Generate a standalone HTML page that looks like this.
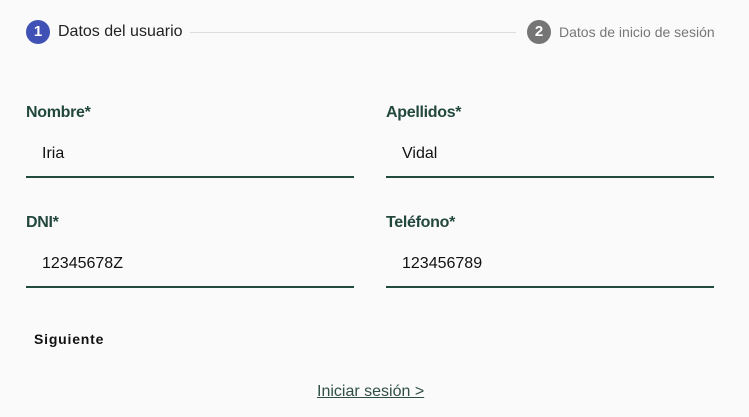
<!DOCTYPE html>
<html><head><meta charset="utf-8"><style>
body{margin:0;width:749px;height:417px;background:#fafafa;font-family:"Liberation Sans",sans-serif;position:relative;overflow:hidden}
.a{position:absolute}
.c{width:24px;height:24px;border-radius:50%;color:#fff;font-size:15px;font-weight:bold;text-align:center;line-height:24px}
.lbl{font-weight:bold;font-size:16px;color:#22473d;letter-spacing:-0.3px}
.val{font-size:16px;color:#111}
.ln{height:2px;background:#234a3f}
</style></head><body>
<div class="a c" style="left:26px;top:20px;background:#3f51b5">1</div>
<div class="a" style="left:58px;top:23px;font-size:16px;color:#222">Datos del usuario</div>
<div class="a" style="left:190px;top:32px;width:326px;height:1px;background:#ddd"></div>
<div class="a c" style="left:527px;top:20px;background:#757575">2</div>
<div class="a" style="left:559px;top:24px;font-size:14px;color:#777">Datos de inicio de sesión</div>

<div class="a lbl" style="left:26px;top:104px">Nombre*</div>
<div class="a val" style="left:42px;top:145px">Iria</div>
<div class="a ln" style="left:26px;top:176px;width:328px"></div>
<div class="a lbl" style="left:386px;top:104px">Apellidos*</div>
<div class="a val" style="left:402px;top:145px">Vidal</div>
<div class="a ln" style="left:386px;top:176px;width:328px"></div>

<div class="a lbl" style="left:26px;top:214px">DNI*</div>
<div class="a val" style="left:42px;top:255px">12345678Z</div>
<div class="a ln" style="left:26px;top:286px;width:328px"></div>
<div class="a lbl" style="left:386px;top:214px">Teléfono*</div>
<div class="a val" style="left:402px;top:255px">123456789</div>
<div class="a ln" style="left:386px;top:286px;width:328px"></div>

<div class="a" style="left:34px;top:331px;font-size:14px;font-weight:bold;letter-spacing:0.8px;color:#111">Siguiente</div>
<div class="a" style="left:317px;top:383px;font-size:16px;color:#2f4f46;text-decoration:underline">Iniciar sesión &gt;</div>
</body></html>
